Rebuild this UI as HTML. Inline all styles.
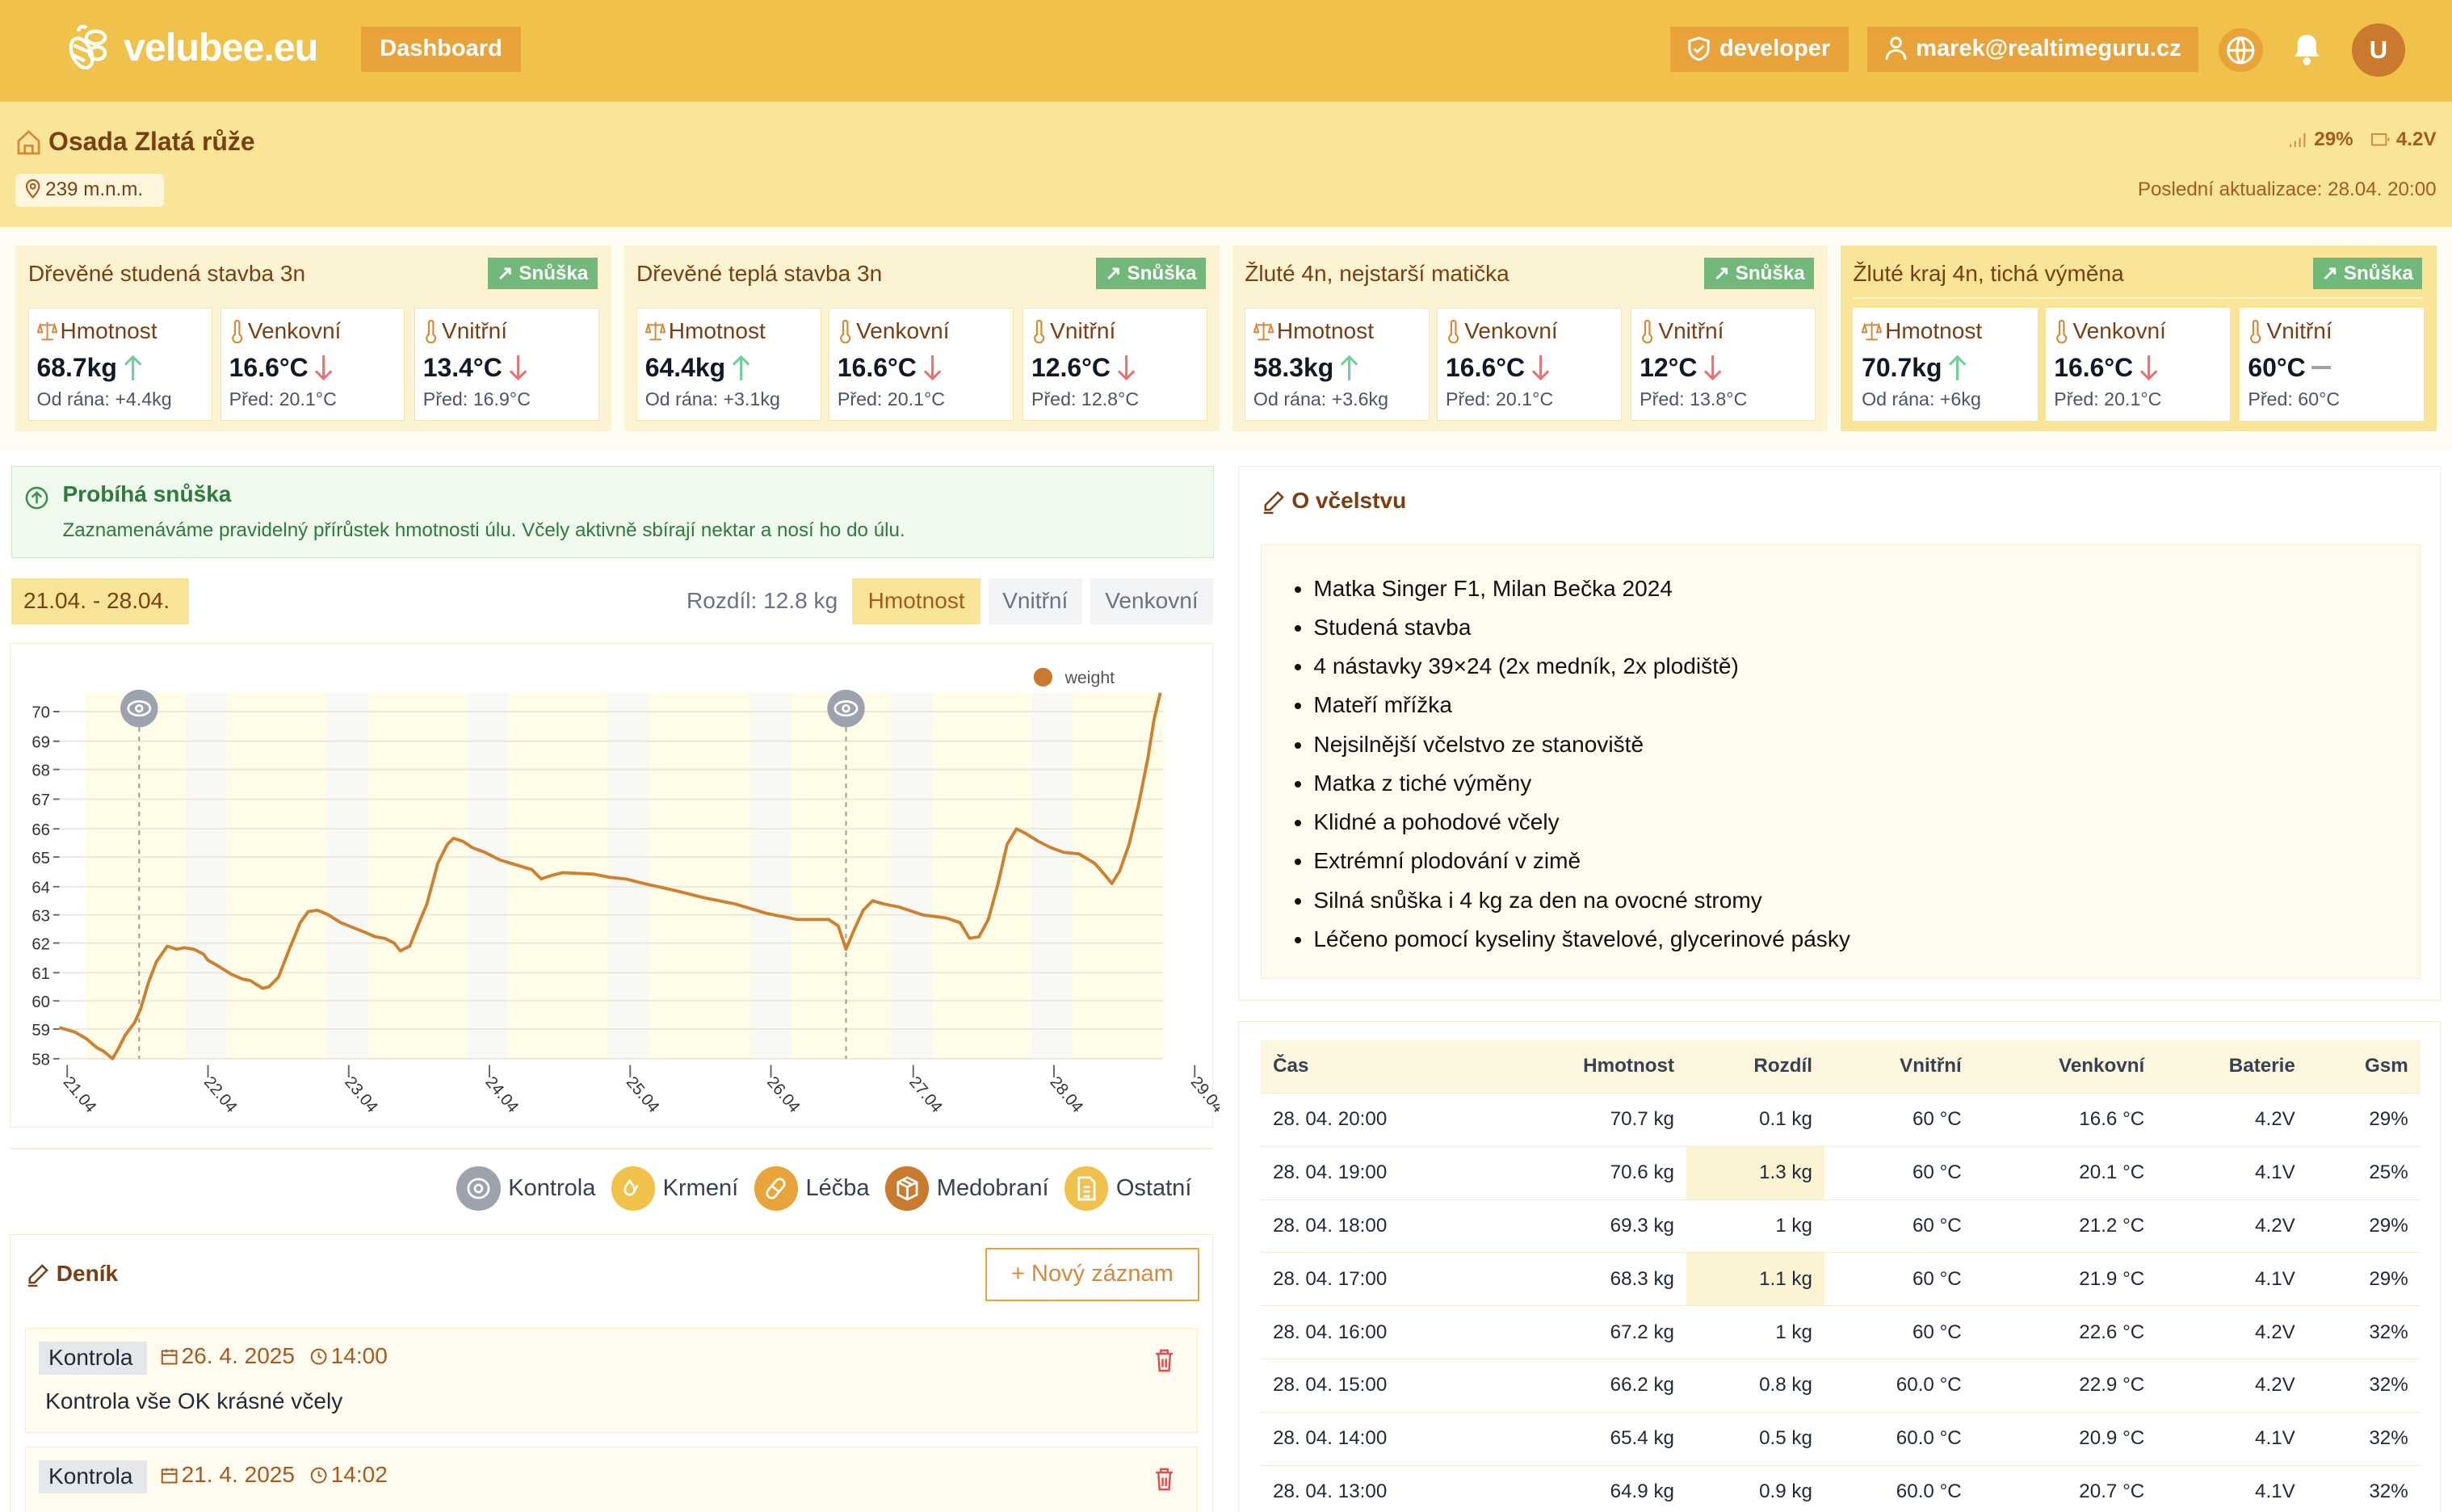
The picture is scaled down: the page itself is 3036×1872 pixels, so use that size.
<!DOCTYPE html>
<html><head><meta charset="utf-8">
<style>
*{box-sizing:border-box;margin:0;padding:0}
html,body{width:3036px;height:1872px;overflow:hidden;background:#fff}
#r{position:relative;width:1568px;height:967px;zoom:1.93622;font-family:"Liberation Sans",sans-serif;color:#1f2937;background:#fffdf3;overflow:hidden}
.a{position:absolute}
.brown{color:#7a3e12}
.hdr{left:0;top:0;width:1568px;height:65px;background:#f1c24b}
.btn{background:#e8a33a;color:#fff;font-weight:bold;font-size:15px;display:flex;align-items:center;justify-content:center;gap:6px}
.hive{width:381px;height:119px;background:#fcf3d2}
.hive .t{left:8px;top:10px;font-size:14.5px;color:#7a3e12}
.sn{right:9px;top:8px;width:70px;height:20px;background:#72b87a;color:#fff;font-size:12.5px;font-weight:bold;display:flex;align-items:center;justify-content:center;gap:3px}
.bx{top:40px;width:118px;height:72px;background:#fff;border:1px solid #f6e7b0}
.bx .l{left:5px;top:6px;font-size:14.5px;color:#7a3e12;display:flex;align-items:center;gap:2px}
.bx .v{left:5px;top:28px;font-size:16.5px;font-weight:bold;color:#111827;display:flex;align-items:center;gap:4px}
.bx .s{left:5px;top:51px;font-size:12px;color:#4b5563}
table{border-collapse:collapse;font-size:12.5px}
td,th{height:34px;padding:0 8px;text-align:right;border-bottom:1px solid #f3ead0}
th{background:#fcf6df;font-weight:bold;color:#374151;height:34px}
td:first-child,th:first-child{text-align:left}
.leg{display:flex;align-items:center;gap:5px;font-size:15px;color:#374151}
.ci{width:28px;height:28px;border-radius:50%;display:flex;align-items:center;justify-content:center}
</style></head><body><div id="r">
<svg width="0" height="0" style="position:absolute"><defs>
<symbol id="th" viewBox="0 0 10 16"><path d="M3.5 2a1.5 1.5 0 013 0v8a3 3 0 11-3 0z" fill="none" stroke="#d48a3a" stroke-width="1.2"/></symbol>
<symbol id="sc" viewBox="0 0 14 14"><path d="M7 1v12M3 13h8M2 3h10M2 3l-1.5 5h3zM12 3l-1.5 5h3z" fill="none" stroke="#d48a3a" stroke-width="1.1"/></symbol>
<symbol id="up" viewBox="0 0 12 18"><path d="M6 17V2M1 7l5-5 5 5" fill="none" stroke="#6fcf97" stroke-width="1.6"/></symbol>
<symbol id="dn" viewBox="0 0 12 18"><path d="M6 1v15M1 11l5 5 5-5" fill="none" stroke="#e57373" stroke-width="1.6"/></symbol>
<symbol id="cal" viewBox="0 0 12 12"><rect x="1" y="2" width="10" height="9" fill="none" stroke="#a85a1e" stroke-width="1.1"/><path d="M1 5h10M4 1v2M8 1v2" stroke="#a85a1e" stroke-width="1.1"/></symbol>
<symbol id="clk" viewBox="0 0 12 12"><circle cx="6" cy="6" r="5" fill="none" stroke="#a85a1e" stroke-width="1.1"/><path d="M6 3v3l2 1" fill="none" stroke="#a85a1e" stroke-width="1.1"/></symbol>
<symbol id="tr" viewBox="0 0 12 14"><path d="M1 3h10M4 3V1h4v2M2.5 3l.7 10h5.6l.7-10M5 6v5M7 6v5" fill="none" stroke="#e05252" stroke-width="1.2"/></symbol>
</defs></svg>
<div class="a hdr"></div>
<svg class="a" style="left:38px;top:14px" width="34" height="34" viewBox="0 0 34 34" fill="none" stroke="#fff" stroke-width="2.2"><ellipse cx="14" cy="20" rx="6" ry="10" transform="rotate(-25 14 20)"/><path d="M9 15l9 4M8 21l8 4"/><ellipse cx="23" cy="10" rx="6" ry="4"/><ellipse cx="24" cy="20" rx="5" ry="4"/><path d="M12 6c0-3 3-4 5-2"/></svg>
<div class="a" style="left:79px;top:16px;font-size:25px;font-weight:bold;color:#fff;letter-spacing:-0.5px">velubee.eu</div>
<div class="a btn" style="left:231px;top:17px;width:102px;height:29px">Dashboard</div>
<div class="a btn" style="left:1068px;top:17px;width:114px;height:29px"><svg width="14" height="16" viewBox="0 0 14 16" fill="none" stroke="#fff" stroke-width="1.5"><path d="M7 1l6 2v5c0 4-3 6-6 7-3-1-6-3-6-7V3z"/><path d="M4 8l2 2 4-4"/></svg>developer</div>
<div class="a btn" style="left:1194px;top:17px;width:212px;height:29px"><svg width="14" height="16" viewBox="0 0 14 16" fill="none" stroke="#fff" stroke-width="1.5"><circle cx="7" cy="4" r="3"/><path d="M1 15c0-4 3-6 6-6s6 2 6 6"/></svg>marek@realtimeguru.cz</div>
<div class="a" style="left:1419px;top:18px;width:28px;height:28px;border-radius:50%;background:#e8a33a"></div>
<svg class="a" style="left:1423px;top:22px" width="20" height="20" viewBox="0 0 20 20" fill="none" stroke="#fff" stroke-width="1.6"><circle cx="10" cy="10" r="8"/><path d="M2 10h16M10 2c3 3 3 13 0 16M10 2c-3 3-3 13 0 16"/></svg>
<svg class="a" style="left:1465px;top:21px" width="20" height="22" viewBox="0 0 20 22" fill="#fff"><path d="M10 1c-4 0-6 3-6 6v5l-2 3h16l-2-3V7c0-3-2-6-6-6z"/><circle cx="10" cy="18" r="2.5"/></svg>
<div class="a" style="left:1504px;top:15px;width:34px;height:34px;border-radius:50%;background:#c97a2e;color:#fff;font-weight:bold;font-size:16px;display:flex;align-items:center;justify-content:center">U</div>

<div class="a" style="left:0;top:65px;width:1568px;height:80px;background:#f8e597"></div>
<svg class="a" style="left:11px;top:83px" width="15" height="16" viewBox="0 0 15 16" fill="none" stroke="#d48a3a" stroke-width="1.4"><path d="M1 7l6.5-6 6.5 6v8H1z"/><path d="M5 15v-5h5v5"/></svg>
<div class="a brown" style="left:31px;top:81px;font-size:16.5px;font-weight:bold">Osada Zlatá růže</div>
<div class="a" style="left:10px;top:111px;width:95px;height:21px;background:#fdf6dc;border-radius:3px;font-size:12.5px;color:#7a3e12;padding:3px 0 0 6px;display:flex;gap:3px"><svg width="10" height="13" viewBox="0 0 10 13" fill="none" stroke="#a85a1e" stroke-width="1.1"><path d="M5 12s4-4 4-7a4 4 0 00-8 0c0 3 4 7 4 7z"/><circle cx="5" cy="5" r="1.5"/></svg>239 m.n.m.</div>
<div class="a" style="right:10px;top:82px;font-size:12.5px;color:#a85a1e;display:flex;align-items:center;gap:4px"><svg width="12" height="10" viewBox="0 0 12 10" stroke="#d48a3a" stroke-width="1"><path d="M1 10V8M4 10V6M7 10V4M10 10V1"/></svg><b style="font-weight:600">29%</b>&nbsp;<svg width="12" height="8" viewBox="0 0 12 8" fill="none" stroke="#d48a3a"><rect x="0.5" y="0.5" width="9" height="7"/><path d="M11 3v2"/></svg><b style="font-weight:600">4.2V</b></div>
<div class="a" style="right:10px;top:114px;font-size:12.5px;color:#a85a1e">Poslední aktualizace: 28.04. 20:00</div>

<!-- hives -->
<div class="a hive" style="left:10px;top:157px"><div class="a t">Dřevěné studená stavba 3n</div><div class="a sn">↗ Snůška</div>
<div class="a bx" style="left:8px"><div class="a l"><svg width="13" height="13"><use href="#sc"/></svg>Hmotnost</div><div class="a v">68.7kg <svg width="12" height="18"><use href="#up"/></svg></div><div class="a s">Od rána: +4.4kg</div></div>
<div class="a bx" style="left:131px"><div class="a l"><svg width="10" height="15"><use href="#th"/></svg> Venkovní</div><div class="a v">16.6°C <svg width="12" height="18"><use href="#dn"/></svg></div><div class="a s">Před: 20.1°C</div></div>
<div class="a bx" style="left:255px"><div class="a l"><svg width="10" height="15"><use href="#th"/></svg> Vnitřní</div><div class="a v">13.4°C <svg width="12" height="18"><use href="#dn"/></svg></div><div class="a s">Před: 16.9°C</div></div></div>
<div class="a hive" style="left:399px;top:157px"><div class="a t">Dřevěné teplá stavba 3n</div><div class="a sn">↗ Snůška</div>
<div class="a bx" style="left:8px"><div class="a l"><svg width="13" height="13"><use href="#sc"/></svg>Hmotnost</div><div class="a v">64.4kg <svg width="12" height="18"><use href="#up"/></svg></div><div class="a s">Od rána: +3.1kg</div></div>
<div class="a bx" style="left:131px"><div class="a l"><svg width="10" height="15"><use href="#th"/></svg> Venkovní</div><div class="a v">16.6°C <svg width="12" height="18"><use href="#dn"/></svg></div><div class="a s">Před: 20.1°C</div></div>
<div class="a bx" style="left:255px"><div class="a l"><svg width="10" height="15"><use href="#th"/></svg> Vnitřní</div><div class="a v">12.6°C <svg width="12" height="18"><use href="#dn"/></svg></div><div class="a s">Před: 12.8°C</div></div></div>
<div class="a hive" style="left:788px;top:157px"><div class="a t">Žluté 4n, nejstarší matička</div><div class="a sn">↗ Snůška</div>
<div class="a bx" style="left:8px"><div class="a l"><svg width="13" height="13"><use href="#sc"/></svg>Hmotnost</div><div class="a v">58.3kg <svg width="12" height="18"><use href="#up"/></svg></div><div class="a s">Od rána: +3.6kg</div></div>
<div class="a bx" style="left:131px"><div class="a l"><svg width="10" height="15"><use href="#th"/></svg> Venkovní</div><div class="a v">16.6°C <svg width="12" height="18"><use href="#dn"/></svg></div><div class="a s">Před: 20.1°C</div></div>
<div class="a bx" style="left:255px"><div class="a l"><svg width="10" height="15"><use href="#th"/></svg> Vnitřní</div><div class="a v">12°C <svg width="12" height="18"><use href="#dn"/></svg></div><div class="a s">Před: 13.8°C</div></div></div>
<div class="a hive" style="left:1177px;top:157px;background:#f8e597"><div class="a t">Žluté kraj 4n, tichá výměna</div><div class="a sn">↗ Snůška</div>
<div class="a" style="left:8px;top:33px;width:365px;height:1px;background:#fcf0c0"></div>
<div class="a bx" style="left:8px;border-color:#fff"><div class="a l"><svg width="13" height="13"><use href="#sc"/></svg>Hmotnost</div><div class="a v">70.7kg <svg width="12" height="18"><use href="#up"/></svg></div><div class="a s">Od rána: +6kg</div></div>
<div class="a bx" style="left:131px;border-color:#fff"><div class="a l"><svg width="10" height="15"><use href="#th"/></svg> Venkovní</div><div class="a v">16.6°C <svg width="12" height="18"><use href="#dn"/></svg></div><div class="a s">Před: 20.1°C</div></div>
<div class="a bx" style="left:255px;border-color:#fff"><div class="a l"><svg width="10" height="15"><use href="#th"/></svg> Vnitřní</div><div class="a v">60°C <span style="display:inline-block;width:12px;height:2px;background:#9ca3af"></span></div><div class="a s">Před: 60°C</div></div></div>

<div class="a" style="left:0;top:288px;width:1568px;height:679px;background:#fff"></div>
<!-- alert -->
<div class="a" style="left:7px;top:298px;width:769px;height:59px;background:#f0f9ee;border:1px solid #cfe9cf"></div>
<svg class="a" style="left:16px;top:311px" width="15" height="15" viewBox="0 0 15 15" fill="none" stroke="#3f8f4f" stroke-width="1.3"><circle cx="7.5" cy="7.5" r="6.5"/><path d="M7.5 11V4M4.5 7l3-3 3 3"/></svg>
<div class="a" style="left:40px;top:308px;font-size:14.5px;font-weight:bold;color:#2f7a3d">Probíhá snůška</div>
<div class="a" style="left:40px;top:332px;font-size:12.5px;color:#2f7a3d">Zaznamenáváme pravidelný přírůstek hmotnosti úlu. Včely aktivně sbírají nektar a nosí ho do úlu.</div>

<div class="a" style="left:7px;top:370px;width:114px;height:29px;background:#f8e597;color:#7a3e12;font-size:14.5px;padding:6px 0 0 8px">21.04. - 28.04.</div>
<div class="a" style="left:439px;top:376px;font-size:14.5px;color:#6b7280">Rozdíl: 12.8 kg</div>
<div class="a" style="left:545px;top:370px;width:82px;height:29px;background:#f8e597;color:#a85a1e;font-size:14.5px;text-align:center;padding-top:6px">Hmotnost</div>
<div class="a" style="left:632px;top:370px;width:60px;height:29px;background:#f3f4f6;color:#6b7280;font-size:14.5px;text-align:center;padding-top:6px">Vnitřní</div>
<div class="a" style="left:697px;top:370px;width:79px;height:29px;background:#f3f4f6;color:#6b7280;font-size:14.5px;text-align:center;padding-top:6px">Venkovní</div>

<!-- chart -->
<div class="a" style="left:6px;top:411px;width:770px;height:310px;border:1px solid #f6ecd0;background:#fff"></div>
<svg class="a" style="left:0;top:0" width="780" height="720" viewBox="0 0 780 720" font-family="Liberation Sans" font-size="10.5">
<rect x="55" y="443" width="690" height="234" fill="#fffde8"/>
<g fill="#f8f8f5"><rect x="119" y="443" width="26" height="234"/><rect x="209" y="443" width="26" height="234"/><rect x="299" y="443" width="26" height="234"/><rect x="389" y="443" width="26" height="234"/><rect x="480" y="443" width="26" height="234"/><rect x="570" y="443" width="26" height="234"/><rect x="660" y="443" width="26" height="234"/></g>
<g stroke="#ebe7da" stroke-width="1"><path d="M38 455H744M38 474H744M38 492H744M38 511H744M38 530H744M38 548H744M38 567H744M38 585H744M38 603H744M38 622H744M38 640H744M38 658H744M38 677H744"/></g>
<g stroke="#666" stroke-width="1"><path d="M38 455h-4M38 474h-4M38 492h-4M38 511h-4M38 530h-4M38 548h-4M38 567h-4M38 585h-4M38 603h-4M38 622h-4M38 640h-4M38 658h-4M38 677h-4"/><path d="M43 681v8M133 681v8M223 681v8M313 681v8M403 681v8M493 681v8M584 681v8M674 681v8M764 681v8"/></g>
<g fill="#333" text-anchor="end"><text x="32" y="459">70</text><text x="32" y="478">69</text><text x="32" y="496">68</text><text x="32" y="515">67</text><text x="32" y="534">66</text><text x="32" y="552">65</text><text x="32" y="571">64</text><text x="32" y="589">63</text><text x="32" y="607">62</text><text x="32" y="626">61</text><text x="32" y="644">60</text><text x="32" y="662">59</text><text x="32" y="681">58</text></g>
<g fill="#333"><text transform="translate(40 692) rotate(50)">21.04</text><text transform="translate(130 692) rotate(50)">22.04</text><text transform="translate(220 692) rotate(50)">23.04</text><text transform="translate(310 692) rotate(50)">24.04</text><text transform="translate(400 692) rotate(50)">25.04</text><text transform="translate(490 692) rotate(50)">26.04</text><text transform="translate(581 692) rotate(50)">27.04</text><text transform="translate(671 692) rotate(50)">28.04</text><text transform="translate(761 692) rotate(50)">29.04</text></g>
<path d="M89 453V677M541 453V677" stroke="#999" stroke-dasharray="3 3"/>
<circle cx="89" cy="453" r="12" fill="#9ca3af"/><circle cx="541" cy="453" r="12" fill="#9ca3af"/>
<g fill="none" stroke="#fff" stroke-width="1.4"><ellipse cx="89" cy="453" rx="7" ry="4.5"/><circle cx="89" cy="453" r="2"/><ellipse cx="541" cy="453" rx="7" ry="4.5"/><circle cx="541" cy="453" r="2"/></g>
<circle cx="667" cy="433" r="6" fill="#c97a2e"/><text x="681" y="437" fill="#555" font-size="11">weight</text>
<polyline fill="none" stroke="#cc8030" stroke-width="2" stroke-linejoin="round" points="38,657 48,660 55,664 62,670 66,672 72,677 76,670 80,662 86,654 90,645 95,628 100,615 107,605 113,607 118,606 124,607 130,610 133,614 140,618 148,623 155,626 160,627 168,632 172,631 178,625 185,607 192,590 197,583 203,582 210,585 218,590 228,594 233,596 240,599 246,600 252,603 256,608 262,605 268,590 273,578 280,552 286,540 290,536 296,538 302,542 310,545 320,550 330,553 340,556 346,562 352,560 360,558 380,559 390,561 400,562 412,565 430,569 450,574 470,578 490,584 510,588 530,588 536,592 541,607 546,595 552,582 558,576 565,578 575,580 590,585 605,587 614,590 620,600 626,599 632,588 638,566 644,540 650,530 656,533 664,538 672,542 680,545 690,546 700,552 707,560 711,565 716,557 722,540 728,515 734,485 738,460 742,443"/>
</svg>

<div class="a" style="left:6px;top:734px;width:770px;height:1px;background:#f6ecd0"></div>
<div class="a" style="left:292px;top:746px;display:flex;gap:10px">
<div class="leg"><div class="ci" style="background:#9ca3af"><svg width="16" height="16" viewBox="0 0 16 16" fill="none" stroke="#fff" stroke-width="1.4"><ellipse cx="8" cy="8" rx="6.5" ry="6"/><circle cx="8" cy="8" r="2.3"/></svg></div>Kontrola</div>
<div class="leg"><div class="ci" style="background:#f1c24b"><svg width="16" height="16" viewBox="0 0 16 16" fill="none" stroke="#fff" stroke-width="1.4"><path d="M6 3c-2 3-3 4-3 6a3 3 0 006 0c0-2-1-3-3-6zM11 6c-1 2-2 3-2 4"/></svg></div>Krmení</div>
<div class="leg"><div class="ci" style="background:#e8a33a"><svg width="16" height="16" viewBox="0 0 16 16" fill="none" stroke="#fff" stroke-width="1.4"><rect x="5" y="1" width="6" height="14" rx="3" transform="rotate(40 8 8)"/><path d="M5 6l5 4"/></svg></div>Léčba</div>
<div class="leg"><div class="ci" style="background:#c97a2e"><svg width="16" height="16" viewBox="0 0 16 16" fill="none" stroke="#fff" stroke-width="1.4"><path d="M8 1l6 3v8l-6 3-6-3V4zM2 4l6 3 6-3M8 7v8M5 2.5l6 3"/></svg></div>Medobraní</div>
<div class="leg"><div class="ci" style="background:#f1c24b"><svg width="16" height="16" viewBox="0 0 16 16" fill="none" stroke="#fff" stroke-width="1.4"><path d="M3 1h7l3 3v11H3zM6 7h4M6 10h4M6 13h4"/></svg></div>Ostatní</div>
</div>

<!-- Denik -->
<div class="a" style="left:6px;top:789px;width:770px;height:190px;border:1px solid #f6ecd0"></div>
<svg class="a" style="left:16px;top:807px" width="16" height="16" viewBox="0 0 16 16" fill="none" stroke="#7a3e12" stroke-width="1.3"><path d="M11 2l3 3-8 8H3v-3zM2 15h6"/></svg>
<div class="a brown" style="left:36px;top:806px;font-size:14.5px;font-weight:bold">Deník</div>
<div class="a" style="left:630px;top:798px;width:137px;height:34px;border:1.5px solid #e8a33a;color:#d48a3a;font-size:15px;text-align:center;padding-top:7px">+ Nový záznam</div>
<div class="a" style="left:16px;top:849px;width:750px;height:67px;background:#fffcef;border:1px solid #f8edc8"></div>
<div class="a" style="left:25px;top:858px;width:69px;height:21px;background:#e5e7eb;font-size:14.5px;padding:2px 0 0 6px;color:#1f2937">Kontrola</div>
<div class="a" style="left:103px;top:859px;font-size:14.5px;color:#a85a1e;display:flex;align-items:center;gap:2px"><svg width="11" height="11"><use href="#cal"/></svg>26. 4. 2025 &nbsp;<svg width="11" height="11"><use href="#clk"/></svg> 14:00</div>
<div class="a" style="left:29px;top:888px;font-size:14.5px;color:#1f2937">Kontrola vše OK krásné včely</div>
<svg class="a" style="left:738px;top:862px" width="13" height="16"><use href="#tr"/></svg>
<div class="a" style="left:16px;top:925px;width:750px;height:60px;background:#fffcef;border:1px solid #f8edc8"></div>
<div class="a" style="left:25px;top:934px;width:69px;height:21px;background:#e5e7eb;font-size:14.5px;padding:2px 0 0 6px">Kontrola</div>
<div class="a" style="left:103px;top:935px;font-size:14.5px;color:#a85a1e;display:flex;align-items:center;gap:2px"><svg width="11" height="11"><use href="#cal"/></svg>21. 4. 2025 &nbsp;<svg width="11" height="11"><use href="#clk"/></svg> 14:02</div>
<svg class="a" style="left:738px;top:938px" width="13" height="16"><use href="#tr"/></svg>

<!-- O včelstvu -->
<div class="a" style="left:792px;top:298px;width:769px;height:342px;border:1px solid #f6ecd0"></div>
<svg class="a" style="left:806px;top:313px" width="16" height="16" viewBox="0 0 16 16" fill="none" stroke="#7a3e12" stroke-width="1.3"><path d="M11 2l3 3-8 8H3v-3zM2 15h6"/></svg>
<div class="a brown" style="left:826px;top:312px;font-size:14.5px;font-weight:bold">O včelstvu</div>
<div class="a" style="left:806px;top:348px;width:742px;height:278px;background:#fffcef;border:1px solid #f8edc8"></div>
<ul class="a" style="left:840px;top:364px;font-size:14.5px;line-height:24.9px;color:#111">
<li>Matka Singer F1, Milan Bečka 2024</li><li>Studená stavba</li><li>4 nástavky 39×24 (2x medník, 2x plodiště)</li><li>Mateří mřížka</li><li>Nejsilnější včelstvo ze stanoviště</li><li>Matka z tiché výměny</li><li>Klidné a pohodové včely</li><li>Extrémní plodování v zimě</li><li>Silná snůška i 4 kg za den na ovocné stromy</li><li>Léčeno pomocí kyseliny štavelové, glycerinové pásky</li></ul>

<div class="a" style="left:792px;top:653px;width:769px;height:330px;border:1px solid #f6ecd0"></div>
<table class="a" style="left:806px;top:665px;width:742px">
<tr><th style="width:150px">Čas</th><th>Hmotnost</th><th>Rozdíl</th><th>Vnitřní</th><th>Venkovní</th><th>Baterie</th><th>Gsm</th></tr>
<tr><td>28. 04. 20:00</td><td>70.7 kg</td><td>0.1 kg</td><td>60 °C</td><td>16.6 °C</td><td>4.2V</td><td>29%</td></tr>
<tr><td>28. 04. 19:00</td><td>70.6 kg</td><td style="background:#fcf3d2">1.3 kg</td><td>60 °C</td><td>20.1 °C</td><td>4.1V</td><td>25%</td></tr>
<tr><td>28. 04. 18:00</td><td>69.3 kg</td><td>1 kg</td><td>60 °C</td><td>21.2 °C</td><td>4.2V</td><td>29%</td></tr>
<tr><td>28. 04. 17:00</td><td>68.3 kg</td><td style="background:#fcf3d2">1.1 kg</td><td>60 °C</td><td>21.9 °C</td><td>4.1V</td><td>29%</td></tr>
<tr><td>28. 04. 16:00</td><td>67.2 kg</td><td>1 kg</td><td>60 °C</td><td>22.6 °C</td><td>4.2V</td><td>32%</td></tr>
<tr><td>28. 04. 15:00</td><td>66.2 kg</td><td>0.8 kg</td><td>60.0 °C</td><td>22.9 °C</td><td>4.2V</td><td>32%</td></tr>
<tr><td>28. 04. 14:00</td><td>65.4 kg</td><td>0.5 kg</td><td>60.0 °C</td><td>20.9 °C</td><td>4.1V</td><td>32%</td></tr>
<tr><td>28. 04. 13:00</td><td>64.9 kg</td><td>0.9 kg</td><td>60.0 °C</td><td>20.7 °C</td><td>4.1V</td><td>32%</td></tr>
</table>
</div></body></html>
